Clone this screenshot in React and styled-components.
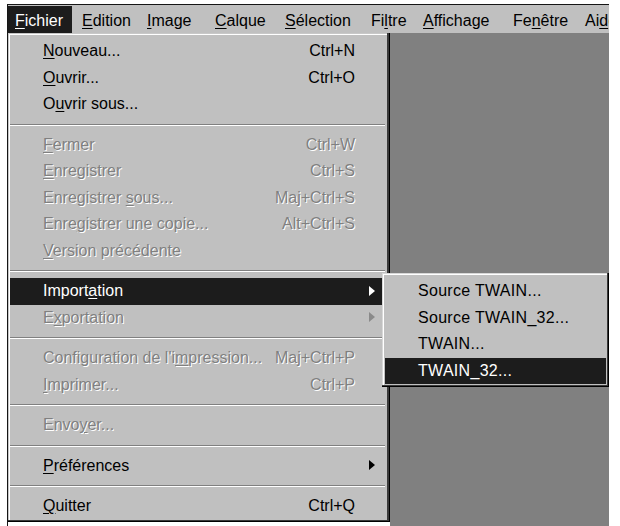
import React from 'react';
import styled, { createGlobalStyle } from 'styled-components';

const Global = createGlobalStyle`
  html, body { margin: 0; padding: 0; background: #fff; overflow: hidden; }
  body { font-family: "Liberation Sans", Arial, sans-serif; font-size: 16px; }
`;

const Frame = styled.div`
  margin: 4px 0 0 7px;
  width: 601px;
  height: 521px;
  border-left: 1px solid #161616;
  border-top: 1px solid #161616;
  display: flex;
  flex-direction: column;
`;

const MenuBar = styled.div`
  height: 28px;
  box-sizing: border-box;
  padding-top: 1px;
  background: #c0c0c0;
  display: flex;
  overflow: hidden;
  flex: none;
`;

const BarItem = styled.div`
  flex: none;
  width: ${p => (p.$w ? `${p.$w}px` : 'auto')};
  padding: 3px 0 0 ${p => p.$pl || 7}px;
  height: 27px;
  box-sizing: border-box;
  line-height: 24px;
  white-space: nowrap;
  color: ${p => (p.$active ? '#fff' : '#000')};
  background: ${p => (p.$active ? '#1c1c1c' : 'transparent')};
`;

const Body = styled.div`
  flex: 1;
  display: flex;
  align-items: flex-start;
  min-height: 0;
`;

const Workspace = styled.div`
  flex: 1;
  align-self: stretch;
  background: #808080;
`;

const Dropdown = styled.div`
  flex: none;
  width: 382px;
  box-sizing: border-box;
  padding: 5px 3px 2px 2px;
  background: #c0c0c0;
  position: relative;
  box-shadow: inset -1px -1px #000, inset -3px -2px #3a3a3a, inset 1px 1px #c8c8c8,
    inset 2px 2px #fff;
`;

const Row = styled.div`
  position: relative;
  display: flex;
  align-items: center;
  height: 26.5px;
  padding-left: 33px;
  white-space: nowrap;
  background: ${p => (p.$active ? '#1c1c1c' : 'transparent')};
  color: ${p => (p.$active ? '#fff' : p.$disabled ? '#808080' : '#000')};
  text-shadow: ${p => (p.$disabled ? '1px 1px 0 #fff' : 'none')};
  letter-spacing: ${p => (p.$spaced ? '0.3px' : '0')};
`;

const Label = styled.span`
  flex: 1;
`;

const Shortcut = styled.span`
  flex: none;
`;

const Tail = styled.span`
  flex: none;
  width: 32px;
  box-sizing: border-box;
  padding-left: 14px;
  display: flex;
  align-items: center;
`;

const Mn = styled.u`
  text-decoration: underline;
  text-underline-offset: 2px;
`;

const Sep = styled.div`
  height: 0;
  margin: 6px 2px 6px 0;
  border-top: 1px solid #808080;
  border-bottom: 1px solid #fff;
`;

const SubMenu = styled.div`
  position: absolute;
  top: -5px;
  left: 372px;
  width: 227px;
  box-sizing: border-box;
  padding: 5px 3px 3px 3px;
  background: #c0c0c0;
  z-index: 2;
  box-shadow: inset -1px -1px #000, inset -2px -2px #3a3a3a, inset 1px 1px #d8d8d8,
    inset 2px 2px #fff;
`;

const Arrow = ({ color, shadow }) => (
  <svg width="7" height="11" viewBox="0 0 7 11" style={{ display: 'block', overflow: 'visible' }}>
    {shadow && <polygon points="1,1 7,6 1,11" fill="#fff" />}
    <polygon points="0,0 6,5 0,10" fill={color} />
  </svg>
);

const Text = ({ t, m }) =>
  m === undefined ? (
    t
  ) : (
    <>
      {t.slice(0, m)}
      <Mn>{t[m]}</Mn>
      {t.slice(m + 1)}
    </>
  );

const bar = [
  { t: 'Fichier', m: 0, w: 64, active: true },
  { t: 'Edition', m: 0, w: 68, pl: 10 },
  { t: 'Image', m: 0, w: 68 },
  { t: 'Calque', m: 0, w: 70 },
  { t: 'Sélection', m: 0, w: 86 },
  { t: 'Filtre', m: 2, w: 52 },
  { t: 'Affichage', m: 0, w: 90 },
  { t: 'Fenêtre', m: 2, w: 72 },
  { t: 'Aide', m: 2 },
];

const sections = [
  [
    { t: 'Nouveau...', m: 0, sc: 'Ctrl+N' },
    { t: 'Ouvrir...', m: 0, sc: 'Ctrl+O' },
    { t: 'Ouvrir sous...', m: 1 },
  ],
  [
    { t: 'Fermer', m: 0, sc: 'Ctrl+W', dis: true },
    { t: 'Enregistrer', m: 0, sc: 'Ctrl+S', dis: true },
    { t: 'Enregistrer sous...', m: 12, sc: 'Maj+Ctrl+S', dis: true },
    { t: 'Enregistrer une copie...', m: 4, sc: 'Alt+Ctrl+S', dis: true },
    { t: 'Version précédente', m: 0, dis: true },
  ],
  [
    { t: 'Importation', m: 6, sub: true, active: true },
    { t: 'Exportation', m: 1, sub: true, dis: true },
  ],
  [
    { t: "Configuration de l'impression...", m: 20, sc: 'Maj+Ctrl+P', dis: true },
    { t: 'Imprimer...', m: 0, sc: 'Ctrl+P', dis: true },
  ],
  [{ t: 'Envoyer...', m: 4, dis: true }],
  [{ t: 'Préférences', m: 0, sub: true }],
  [{ t: 'Quitter', m: 0, sc: 'Ctrl+Q' }],
];

const twain = ['Source TWAIN...', 'Source TWAIN_32...', 'TWAIN...', 'TWAIN_32...'];

export default function App() {
  return (
    <>
      <Global />
      <Frame>
        <MenuBar>
          {bar.map(b => (
            <BarItem key={b.t} $w={b.w} $pl={b.pl} $active={b.active}>
              <Text t={b.t} m={b.m} />
            </BarItem>
          ))}
        </MenuBar>
        <Body>
          <Dropdown>
            {sections.map((sec, si) => (
              <React.Fragment key={si}>
                {si > 0 && <Sep />}
                {sec.map(it => (
                  <Row key={it.t} $active={it.active} $disabled={it.dis}>
                    <Label>
                      <Text t={it.t} m={it.m} />
                    </Label>
                    {it.sc && <Shortcut>{it.sc}</Shortcut>}
                    <Tail>
                      {it.sub && (
                        <Arrow
                          color={it.active ? '#fff' : it.dis ? '#8a8a8a' : '#000'}
                          shadow={false}
                        />
                      )}
                    </Tail>
                    {it.active && (
                      <SubMenu>
                        {twain.map((s, i) => (
                          <Row key={s} $spaced $active={i === 3}>
                            {s}
                          </Row>
                        ))}
                      </SubMenu>
                    )}
                  </Row>
                ))}
              </React.Fragment>
            ))}
          </Dropdown>
          <Workspace />
        </Body>
      </Frame>
    </>
  );
}
